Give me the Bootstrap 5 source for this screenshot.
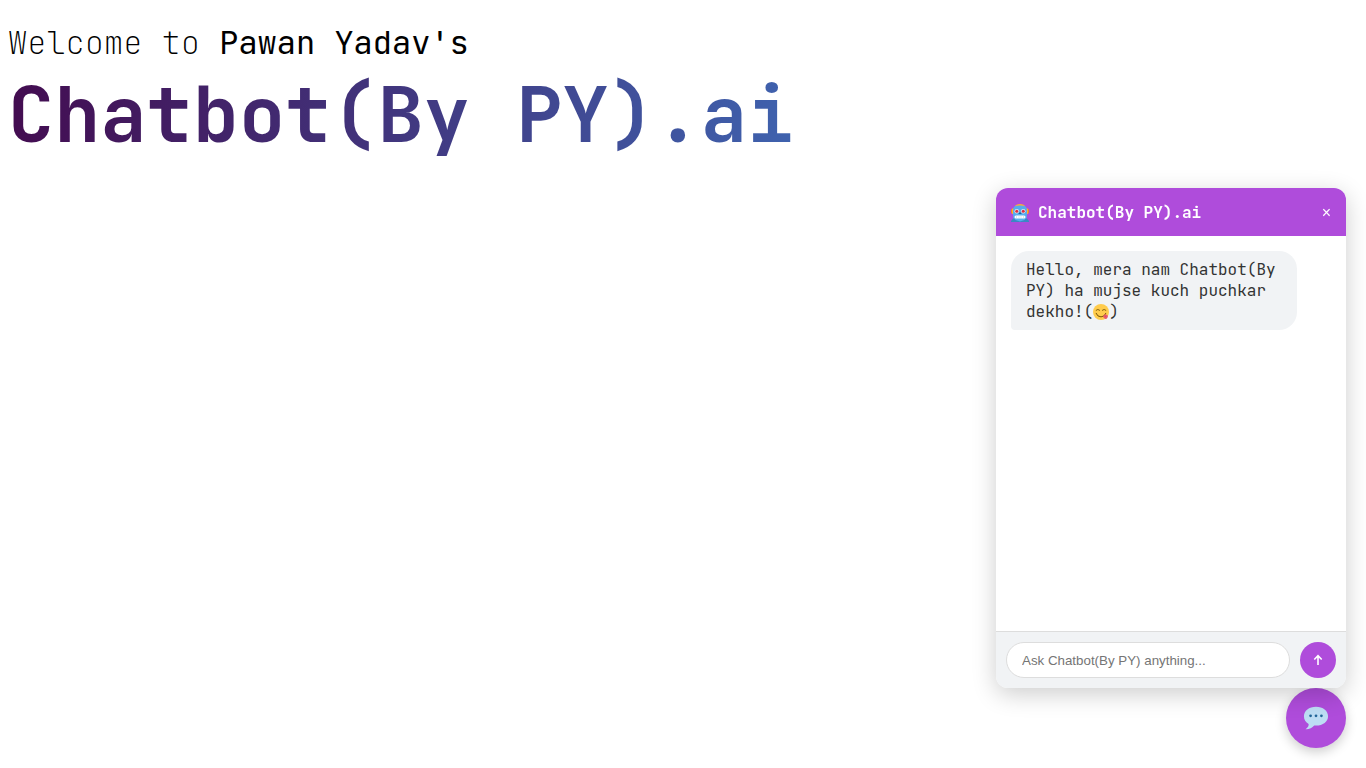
<!DOCTYPE html>
<html lang="en">
<head>
<meta charset="utf-8">
<meta name="viewport" content="width=device-width, initial-scale=1">
<title>Chatbot(By PY).ai</title>
<link href="https://cdn.jsdelivr.net/npm/bootstrap@5.3.0/dist/css/bootstrap.min.css" rel="stylesheet">
<style>
:root{--brand:#af4cdb;--soft:#f1f3f5}
body{font-family:"JetBrains Mono","DejaVu Sans Mono",monospace;color:#000;min-height:100vh}
.hero{padding:21px 8px}
.hero-intro{font-size:32px;line-height:44px;font-weight:100}
.hero-intro span{font-weight:400}
.hero-name{font-size:77px;line-height:98px;font-weight:700;width:fit-content;background:linear-gradient(to right,#430c50,#3f62ae);-webkit-background-clip:text;background-clip:text;color:transparent}
.chat-box{right:20px;bottom:80px;width:350px;max-width:calc(100vw - 40px);height:500px;border-radius:12px;box-shadow:0 6px 24px rgba(0,0,0,.2);z-index:20}
.chat-head{background:var(--brand);height:48px;padding:1px 15px 0}
.chat-title{font-size:16px;line-height:24px;font-weight:700;gap:9px}
.chat-x{font:16px/24px "Liberation Sans",Arial,sans-serif}
.chat-log{padding:15px}
.bubble{background:var(--soft);color:#333;font-size:16px;line-height:21px;padding:8px 15px;border-radius:18px 18px 18px 4px;max-width:calc(80% + 30px)}
.bubble svg{vertical-align:-3px}
.chat-foot{background:var(--soft);border-top:1px solid #ddd;padding:10px;gap:10px}
.ask{height:36px;min-width:0;border:1px solid #ddd;border-radius:20px;padding:0 15px;font-family:"Liberation Sans",Arial,sans-serif;font-size:revert}
.ask::placeholder{color:#757575}
.send{width:36px;height:36px;background:var(--brand)}
.launch{right:20px;bottom:20px;width:60px;height:60px;background:var(--brand);box-shadow:0 4px 12px rgba(0,0,0,.2);z-index:10}
.btn:hover{background:var(--brand)}
</style>
</head>
<body>
<main class="hero">
  <h1 class="m-0">
    <span class="hero-intro d-block">Welcome to <span>Pawan Yadav's</span></span>
    <span class="hero-name d-block">Chatbot(By PY).ai</span>
  </h1>
</main>
<section class="chat-box position-fixed bg-white d-flex flex-column overflow-hidden" aria-label="Chat">
  <header class="chat-head d-flex align-items-center justify-content-between text-white">
    <h2 class="chat-title m-0 d-flex align-items-center">
      <svg width="18" height="18" viewBox="0 0 36 36" aria-hidden="true">
        <ellipse cx="33.5" cy="14.5" rx="2.5" ry="5.5" fill="#f4900c"/>
        <ellipse cx="2.5" cy="14.5" rx="2.5" ry="5.5" fill="#f4900c"/>
        <path d="M34 19a1 1 0 0 1-1 1h-3a1 1 0 0 1-1-1v-9a1 1 0 0 1 1-1h3a1 1 0 0 1 1 1zM7 19a1 1 0 0 1-1 1H3a1 1 0 0 1-1-1v-9a1 1 0 0 1 1-1h3a1 1 0 0 1 1 1z" fill="#ffac33"/>
        <path d="M28 5c0 2.800-4.500 3-10 3S8 7.800 8 5s4.500-5 10-5 10 2.200 10 5z" fill="#ffac33"/>
        <path d="M30 6c0-1.200-5.400-3-12-3S6 4.800 6 6c-2 2-2 8-2 12 0 6 1 12 1 12h26s1-6 1-12c0-4 0-10-2-12z" fill="#55acee"/>
        <path d="M4 29h28l4 5v2H0v-2z" fill="#3b88c3"/>
        <path d="M9 32 6 28h24l-3 4-9 3z" fill="#55acee"/>
        <circle cx="24.500" cy="14.500" r="4.500" fill="#e1e8ed"/><circle cx="24.500" cy="14.500" r="3" fill="#dd2e44"/>
        <circle cx="11.500" cy="14.500" r="4.500" fill="#e1e8ed"/><circle cx="11.500" cy="14.500" r="3" fill="#dd2e44"/>
        <rect x="7" y="23" width="22" height="6" rx="3" fill="#fff"/>
        <path d="M11 23v6M16 23v6M20 23v6M25 23v6" stroke="#b0cce0" stroke-width="1"/>
        <path d="m16 17-1 3h6l-1-3z" fill="#269"/>
      </svg>
      Chatbot(By PY).ai
    </h2>
    <button type="button" class="chat-x border-0 bg-transparent text-white p-0" aria-label="Close">×</button>
  </header>
  <div class="chat-log flex-grow-1 overflow-auto d-flex flex-column align-items-start">
    <p class="bubble m-0">Hello, mera nam Chatbot(By PY) ha mujse kuch puchkar dekho!(<svg width="16" height="16" viewBox="0 0 36 36" aria-hidden="true">
      <circle cx="18" cy="18" r="18" fill="#ffcc4d"/>
      <path d="M7 14q4-4 8 0M21 14q4-4 8 0" fill="none" stroke="#664500" stroke-width="1.800" stroke-linecap="round"/>
      <path d="M7 21q3 8 11 8t11-8" fill="none" stroke="#664500" stroke-width="2" stroke-linecap="round"/>
      <path d="M23 27q2-3 5-4l2 1q5 1 3 6t-6 3q-5-2-4-6z" fill="#e8596e"/>
      <path d="m26 26 3 3" stroke="#dd2e44" stroke-width="1"/>
    </svg>)</p>
  </div>
  <form class="chat-foot d-flex align-items-center">
    <input type="text" class="ask flex-grow-1 bg-white" aria-label="Message" placeholder="Ask Chatbot(By PY) anything...">
    <button type="button" class="send btn rounded-circle border-0 p-0 text-white flex-shrink-0 d-flex align-items-center justify-content-center" aria-label="Send">
      <svg width="12" height="12" viewBox="0 0 12 12" aria-hidden="true"><path d="M6 11V2.500M2.300 5.500 6 1.700l3.700 3.800" fill="none" stroke="currentColor" stroke-width="1.600"/></svg>
    </button>
  </form>
</section>
<button type="button" class="launch position-fixed btn rounded-circle border-0 p-0 d-flex align-items-center justify-content-center" aria-label="Toggle chat">
  <svg width="26" height="26" viewBox="0 0 36 36" aria-hidden="true">
    <path d="M18 2.500C8.300 2.500 1.300 8.100 1.300 15.500c0 4.600 2.500 8.500 6.500 10.800.5 2.500-1.300 5-4.300 7.200 5 .3 9.200-2 12-5.200l2.500.2c9.700 0 16.700-5.600 16.700-13S27.700 2.500 18 2.500z" fill="#bdddf4"/>
    <circle cx="10.500" cy="15" r="1.900" fill="#269"/><circle cx="18" cy="15" r="1.900" fill="#269"/><circle cx="25.500" cy="15" r="1.900" fill="#269"/>
  </svg>
</button>
<script src="https://cdn.jsdelivr.net/npm/bootstrap@5.3.0/dist/js/bootstrap.bundle.min.js"></script>
</body>
</html>
